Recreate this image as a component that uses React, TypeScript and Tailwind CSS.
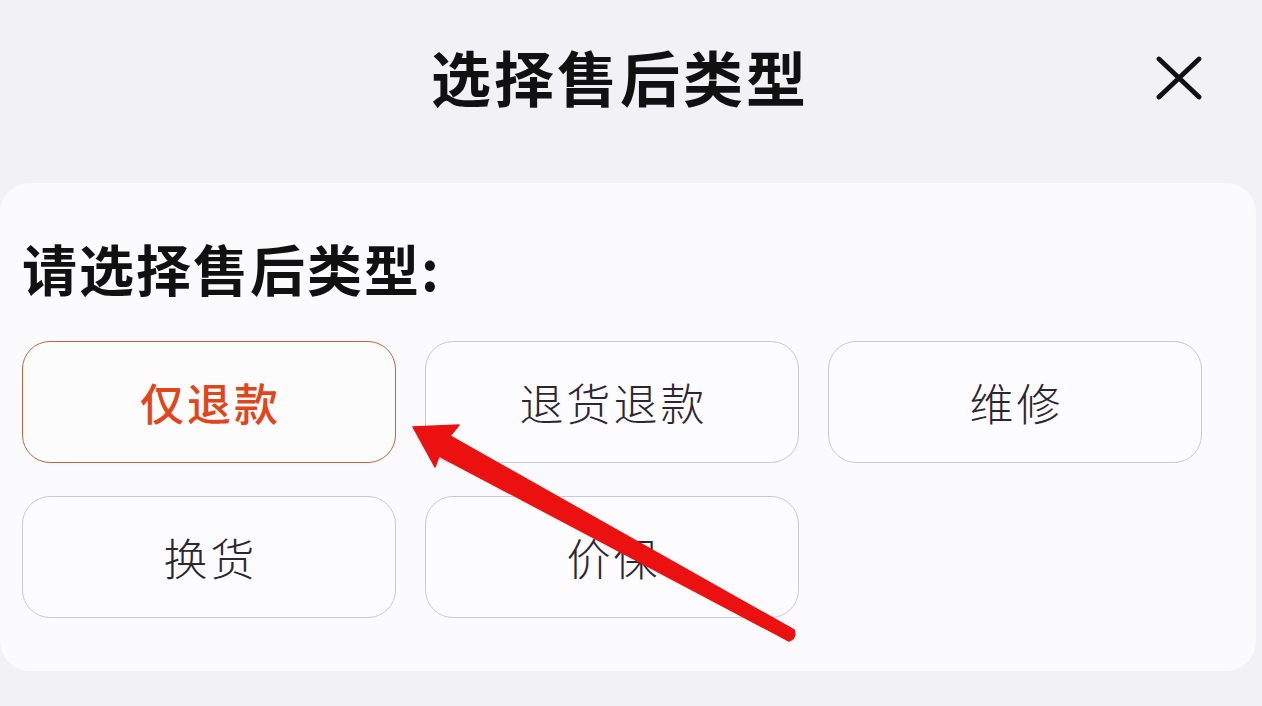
const options = ["仅退款", "退货退款", "维修", "换货", "价保"];

export default function App() {
  const selected = "仅退款";

  return (
    <div
      className="relative h-[706px] w-[1262px] overflow-hidden bg-[#f2f2f6]"
      style={{ fontFamily: '"Noto Sans CJK SC", "Noto Sans", sans-serif' }}
    >
      {/* Header */}
      <header className="relative flex h-[183px] items-start justify-center pr-[22px] pt-[46px]">
        <h1 className="text-[60px] font-bold leading-none tracking-[3px] text-[#111]">
          选择售后类型
        </h1>
        <button type="button" className="absolute left-[1156px] top-[56px] text-[#111]">
          <svg width="46" height="44" viewBox="0 0 46 44">
            <path
              d="M3 3 L43 41 M43 3 L3 41"
              stroke="currentColor"
              strokeWidth="4.8"
              strokeLinecap="round"
            />
          </svg>
        </button>
      </header>

      {/* Card */}
      <section className="mr-[6px] rounded-[30px] bg-[#fbfbfd] pb-[53px] pl-[22px] pt-[57px]">
        <h2 className="text-[55px] font-bold leading-none tracking-[2px] text-[#111]">
          请选择售后类型:
        </h2>

        <div className="mt-[46px] grid grid-cols-[374px_374px_374px] gap-x-[29px] gap-y-[33px]">
          {options.map((o) => {
            const active = o === selected;
            return (
              <button
                key={o}
                type="button"
                className={`flex h-[122px] items-center justify-center rounded-[28px] border pl-[3px] text-[44px] leading-none tracking-[3px] ${
                  active
                    ? "border-[#c2633c] bg-[#fdfcfc] font-medium text-[#e0461c]"
                    : "border-[#c9c9cf] bg-[#fcfcfe] font-light text-[#2b2631]"
                }`}
              >
                {o}
              </button>
            );
          })}
        </div>
      </section>

      {/* Annotation arrow */}
      <svg
        className="pointer-events-none absolute left-0 top-0"
        width="1262"
        height="706"
        viewBox="0 0 1262 706"
      >
        <path
          d="M413 427 L459 425 L450 436 L794 630 Q797 638 789 641 L439 456 L435 467 Z"
          fill="#ec1111"
          stroke="#ec1111"
          strokeWidth="1.5"
          strokeLinejoin="round"
        />
      </svg>
    </div>
  );
}
